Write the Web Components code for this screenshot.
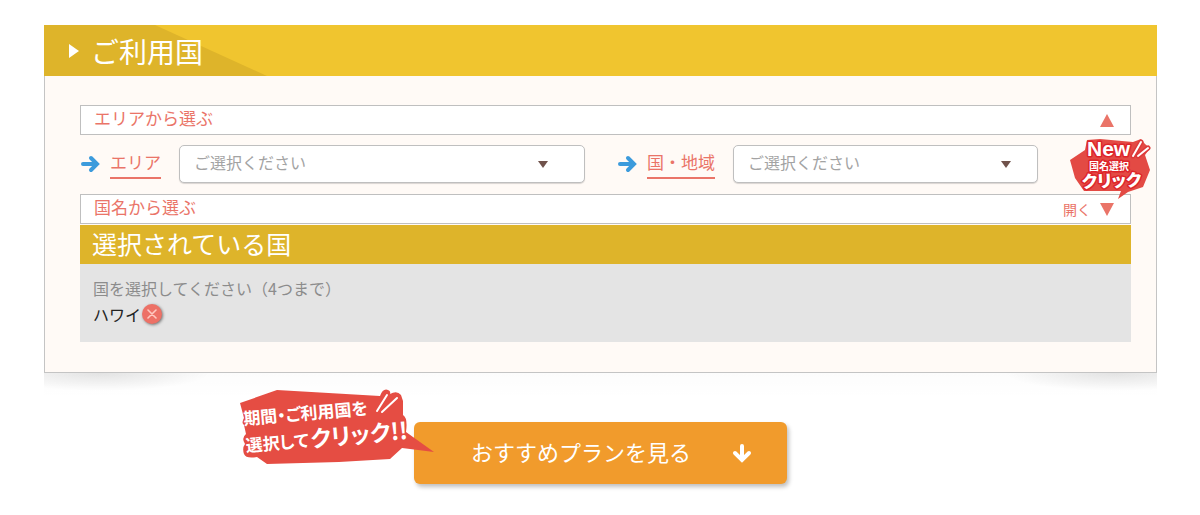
<!DOCTYPE html>
<html lang="ja">
<head>
<meta charset="utf-8">
<meta name="viewport" content="width=device-width, initial-scale=1">
<title>ご利用国</title>
<style>
  body { margin: 0; padding: 25px 43px 25px 44px; background: #fff; color: #222;
    font-family: "Noto Sans CJK JP", sans-serif; font-size: 16px; }
</style>
</head>
<body>
<country-panel>
  <span slot="title">ご利用国</span>
  <accordion-bar expanded>エリアから選ぶ</accordion-bar>
  <field-row>
    <select-field class="area" label="エリア" placeholder="ご選択ください"></select-field>
    <select-field class="country" label="国・地域" placeholder="ご選択ください"></select-field>
    <new-badge></new-badge>
  </field-row>
  <accordion-bar hint="開く">国名から選ぶ</accordion-bar>
  <selected-countries>
    <span slot="title">選択されている国</span>
    <span slot="note">国を選択してください（4つまで）</span>
    <country-chip>ハワイ</country-chip>
  </selected-countries>
</country-panel>
<plan-action>おすすめプランを見る</plan-action>

<script>
const define = (name, html, setup) => {
  const template = document.createElement('template');
  template.innerHTML = '<style>*{box-sizing:border-box}button,select{font:inherit;margin:0}svg{display:block;flex:none}</style>' + html;
  customElements.define(name, class extends HTMLElement {
    constructor() {
      super();
      this.attachShadow({ mode: 'open' }).append(template.content.cloneNode(true));
    }
    connectedCallback() { if (setup) setup(this, this.shadowRoot); }
  });
};

define('country-panel', `
<style>
  :host { display: block; position: relative; }
  section { position: relative; background: #fffaf6; border: 1px solid #c4c4c4; border-top: 0; }
  header { position: relative; display: flex; align-items: center; gap: 12px; height: 51px;
    margin: 0 -1px; padding-left: 25px; background: #f0c52f; color: #fff; }
  header::before { content: ""; position: absolute; inset: 0 auto 0 0; width: 223px;
    background: #deb42a; clip-path: polygon(0 0, 111px 0, 100% 100%, 0 100%); }
  header > * { position: relative; }
  h2 { margin: 0; font-size: 28px; line-height: 50px; font-weight: 400; }
  .body { padding: 29px 25px 30px 35px; }
  .curl { position: absolute; top: 100%; left: 0; right: 0; height: 26px;
    background:
      radial-gradient(ellipse 110px 18px at 56px 0, rgba(0,0,0,.1), transparent),
      radial-gradient(ellipse 110px 18px at calc(100% - 42px) 0, rgba(0,0,0,.1), transparent),
      linear-gradient(rgba(0,0,0,.01), transparent); }
</style>
<section>
  <header>
    <svg width="10" height="14" viewBox="0 0 10 14" aria-hidden="true"><path d="M0 0L10 7L0 14Z" fill="#fff"/></svg>
    <h2><slot name="title"></slot></h2>
  </header>
  <div class="body"><slot></slot></div>
</section>
<div class="curl"></div>`);

define('accordion-bar', `
<style>
  :host { display: block; }
  button { display: flex; align-items: center; width: 100%; height: 30px; padding: 0 16px 0 13px;
    background: #fff; border: 1px solid #bfbfbf; color: #ea7468; font-size: 17px; line-height: 24px;
    text-align: left; cursor: pointer; }
  .name { flex: 1; padding-bottom: 4px; }
  .hint { font-size: 14px; margin-right: 9px; }
  :host([expanded]) svg { transform: rotate(180deg); }
</style>
<button type="button"><span class="name"><slot></slot></span><span class="hint"></span>
<svg width="14" height="13" viewBox="0 0 14 13" aria-hidden="true"><path d="M0 0H14L7 13Z" fill="#ea7468"/></svg></button>`,
(host, root) => {
  root.querySelector('.hint').textContent = host.getAttribute('hint') || '';
  root.querySelector('button').setAttribute('aria-expanded', host.hasAttribute('expanded'));
});

define('field-row', `
<style>
  :host { display: flex; align-items: center; gap: 32px; position: relative; height: 59px; padding-right: 93px; }
  ::slotted(.area) { flex: 506 1 0; }
  ::slotted(.country) { flex: 422 1 0; }
  ::slotted(new-badge) { position: absolute; top: 3px; right: -20px; z-index: 1; }
</style><slot></slot>`);

define('select-field', `
<style>
  :host { display: flex; align-items: center; min-width: 0; padding-bottom: 2px; }
  label { flex: none; margin: 0 18px 0 10px; padding-bottom: 2px; border-bottom: 2px solid #ea7468;
    color: #ea7468; font-size: 17px; line-height: 26px; }
  .box { position: relative; flex: 1; min-width: 0; }
  select { display: block; width: 100%; height: 38px; padding: 0 40px 4px 14px; appearance: none;
    background: #fff; border: 1px solid #bfbfbf; border-radius: 5px; color: #a3a3a3; font-size: 16px;
    box-shadow: 0 1px 1px rgba(0,0,0,.15); }
  .caret { position: absolute; right: 9%; top: 16px; pointer-events: none; }
</style>
<svg width="20" height="18" viewBox="0 0 20 18" aria-hidden="true"><path d="M3 9H16M11 3L17 9L11 15" fill="none" stroke="#3c9bdc" stroke-width="4" stroke-linecap="round" stroke-linejoin="miter"/></svg>
<label for="choice"></label>
<div class="box">
  <select id="choice"><option></option></select>
  <svg class="caret" width="10" height="7" viewBox="0 0 10 7" aria-hidden="true"><path d="M0 0H10L5 7Z" fill="#70524b"/></svg>
</div>`,
(host, root) => {
  root.querySelector('label').textContent = host.getAttribute('label');
  root.querySelector('option').textContent = host.getAttribute('placeholder');
});

define('new-badge', `
<style>
  :host { display: block; pointer-events: none; }
  text { font-family: "Noto Sans CJK JP", sans-serif; font-weight: 700; fill: #fff;
    stroke: #dd242a; stroke-width: 3px; stroke-linejoin: round; paint-order: stroke; }
  .new { font-family: "Liberation Sans", sans-serif; font-size: 21px; }
  .name { font-size: 10px; }
  .click { font-size: 17px; font-weight: 900; font-feature-settings: "palt"; }
</style>
<svg width="81" height="62" viewBox="0 0 81 62" role="img" aria-label="New 国名選択クリック">
  <path d="M0 22L15 12L17 2L30 1L63 4L71 1L75 6L80 10L75 17L80 32L73 49L58 54L48 61L51 53L14 53L5 40Z" fill="#e34a44"/>
  <path d="M63 18L71 4M68 18L78 10" stroke="#dd3a3a" stroke-width="5" stroke-linecap="round"/>
  <text class="new" x="17" y="18">New</text>
  <text class="name" x="19" y="32">国名選択</text>
  <text class="click" x="12" y="50" transform="rotate(-2 12 50)">クリック</text>
  <path d="M63 18L71 4M68 18L78 10" stroke="#fff" stroke-width="2" stroke-linecap="round"/>
</svg>`);

define('selected-countries', `
<style>
  :host { display: block; margin-top: 1px; }
  h3 { height: 39px; margin: 0; padding: 0 12px; background: #deb42a; color: #fff; font-size: 25px; line-height: 37px; font-weight: 400; }
  .list { height: 78px; padding: 11px 13px; background: #e4e4e4; line-height: 26px; }
  p { margin: 0; color: #8c8c8c; }
</style>
<h3><slot name="title"></slot></h3>
<div class="list"><p><slot name="note"></slot></p><slot></slot></div>`);

define('country-chip', `
<style>
  :host { display: flex; align-items: center; gap: 1px; }
  button { display: grid; place-items: center; width: 20px; height: 20px; padding: 0; border: 0; border-radius: 50%;
    background: #ed7166; box-shadow: 1px 1px 3px rgba(0,0,0,.5); cursor: pointer; }
</style>
<slot></slot><button type="button" aria-label="削除">
<svg width="10" height="10" viewBox="0 0 10 10" aria-hidden="true"><path d="M1 1L9 9M9 1L1 9" stroke="#ffc9c0" stroke-width="1.6" stroke-linecap="round"/></svg></button>`);

define('click-badge', `
<style>
  :host { display: block; pointer-events: none; }
  text { font-family: "Noto Sans CJK JP", sans-serif; font-weight: 700; fill: #fff; font-feature-settings: "palt"; }
  .small { font-size: 17px; }
  .large { font-size: 23px; }
</style>
<svg width="196" height="78" viewBox="0 0 196 78" role="img" aria-label="期間・ご利用国を選択してクリック!!">
  <path d="M1 15L38 2L141 8Q144 0 149 2Q152 3 151 6Q158 2 162 7L164 13L164 27Q169 30 167 44L195 64L163 60L151 71L100 74L28 76L18 69Q7 71 5 66Q3 60 6 56Q2 50 7 46L5 37Q2 35 5 30Z" fill="#e54d43"/>
  <g transform="rotate(-5 6 38)">
    <text class="small" x="5" y="37">期間・ご利用国を</text>
    <text class="small" x="5" y="64">選択して</text>
    <text class="large" x="70" y="65">クリック!!</text>
  </g>
  <path d="M138 23L148 7M143 24L158 10" stroke="#fff" stroke-width="2" stroke-linecap="round"/>
</svg>`);

define('plan-action', `
<style>
  :host { display: flex; justify-content: center; margin-top: 49px; }
  .wrap { position: relative; flex: 0 1 373px; }
  button { display: flex; align-items: center; width: 100%; height: 62px; padding: 0 35px 0 57px; border: 0; border-radius: 6px;
    background: #f19b2c; color: #fff; font-size: 22px; box-shadow: 2px 3px 4px rgba(0,0,0,.25); cursor: pointer; }
  .text { flex: 1; text-align: left; padding-bottom: 4px; }
  click-badge { position: absolute; left: -175px; top: -34px; }
</style>
<div class="wrap">
  <button type="button"><span class="text"><slot></slot></span>
  <svg width="20" height="20" viewBox="0 0 20 20" aria-hidden="true"><path d="M10 3V17M3 10L10 17L17 10" fill="none" stroke="#fff" stroke-width="4" stroke-linecap="round"/></svg></button>
  <click-badge></click-badge>
</div>`);
</script>
</body>
</html>
